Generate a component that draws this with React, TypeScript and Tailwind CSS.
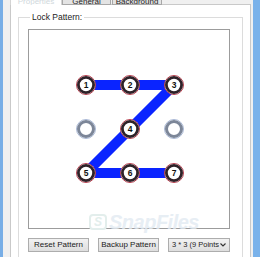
import React from "react";

const cols = [57, 101, 145];
const rows = [55, 99, 143];

const nodes = [
  { x: cols[0], y: rows[0], n: 1 },
  { x: cols[1], y: rows[0], n: 2 },
  { x: cols[2], y: rows[0], n: 3 },
  { x: cols[1], y: rows[1], n: 4 },
  { x: cols[0], y: rows[2], n: 5 },
  { x: cols[1], y: rows[2], n: 6 },
  { x: cols[2], y: rows[2], n: 7 },
];

const idle = [
  { x: cols[0], y: rows[1] },
  { x: cols[2], y: rows[1] },
];

const PatternCanvas = () => {
  const segs = nodes.slice(1).map((p, i) => [nodes[i], p]);
  return (
    <svg width="200" height="198" viewBox="0 0 200 198">
      {segs.map(([a, b], i) => (
        <line key={i} x1={a.x} y1={a.y} x2={b.x} y2={b.y} stroke="#0a24ff" strokeWidth="10" strokeLinecap="butt" />
      ))}
      {idle.map((p, i) => (
        <g key={i}>
          <circle cx={p.x} cy={p.y} r="9.5" fill="none" stroke="#a9b8d6" strokeWidth="1" />
          <circle cx={p.x} cy={p.y} r="7.5" fill="#fff" stroke="#7c8698" strokeWidth="3" />
        </g>
      ))}
      {nodes.map((p) => (
        <g key={p.n}>
          <circle cx={p.x} cy={p.y} r="9.5" fill="#fff" stroke="#b8404f" strokeWidth="1" />
          <circle cx={p.x} cy={p.y} r="7.6" fill="#fff" stroke="#2e2228" strokeWidth="2.8" />
          <text
            x={p.x}
            y={p.y + 3}
            textAnchor="middle"
            fontSize="8.5"
            fontWeight="bold"
            fontFamily="Liberation Sans, Arial, sans-serif"
            fill="#111"
          >
            {p.n}
          </text>
        </g>
      ))}
    </svg>
  );
};

const Btn = ({ children, className }: { children: React.ReactNode; className?: string }) => (
  <div
    className={`h-[14px] flex items-center justify-center whitespace-nowrap border border-[#adadad] bg-gradient-to-b from-[#f2f2f2] to-[#dedede] text-[8px] text-[#1a1a1a] leading-none ${className ?? ""}`}
  >
    {children}
  </div>
);

export default function App() {
  return (
    <div
      className="w-[260px] h-[257px] overflow-hidden flex bg-[#f0f0f0] text-[8px] text-[#1e1e1e]"
      style={{ fontFamily: '"Liberation Sans", Arial, sans-serif' }}
    >
      <div className="w-[3px] bg-[#78aee6]" />

      <div className="w-[250px] flex flex-col pl-[7px] pr-[2px]">
        {/* tab strip, cut off at the top of the shot */}
        <div className="h-[5px] flex items-end relative z-10">
          <div className="w-[52px] h-[5px] border-x border-[#d4d4d4] bg-white overflow-hidden flex items-end justify-center">
            <span className="text-[8px] leading-[8px] text-[#d0d8dc] translate-y-[1px]">Properties</span>
          </div>
          <div className="w-[49px] h-[5px] border border-t-0 border-[#a8a8a8] bg-[#e4e4e4] overflow-hidden flex items-end justify-center">
            <span className="text-[8px] leading-[8px] translate-y-[2px]">General</span>
          </div>
          <div className="ml-[1px] w-[50px] h-[5px] border border-t-0 border-[#a8a8a8] bg-[#e4e4e4] overflow-hidden flex items-end justify-center">
            <span className="text-[8px] leading-[8px] translate-y-[2px]">Background</span>
          </div>
        </div>

        {/* tab page */}
        <div className="-mt-px flex-1 border border-[#c9c9c9] bg-white pl-[7px] pr-[7px] pt-[7px] relative">
          <fieldset className="border border-[#dcdcdc] border-b-0 h-[260px] pl-[9px] pr-[10px] pt-[7px]">
            <legend className="ml-[2px] px-[2px] text-[8.5px] leading-[10px] text-[#222]">Lock Pattern:</legend>
            <div className="w-[202px] h-[200px] border border-[#9c9c9c] bg-white">
              <PatternCanvas />
            </div>
            <div className="mt-[9px] flex gap-[9px]">
              <Btn className="w-[61px]">Reset Pattern</Btn>
              <Btn className="w-[61px]">Backup Pattern</Btn>
              <div className="w-[62px] h-[14px] flex items-center justify-between border border-[#adadad] bg-gradient-to-b from-[#f2f2f2] to-[#dedede] pl-[3px] pr-[3px] text-[7.5px] leading-none">
                <span className="whitespace-nowrap overflow-hidden">3 * 3 (9 Points</span>
                <svg width="6" height="4" viewBox="0 0 6 4" className="shrink-0 ml-[1px]">
                  <path d="M0.5 0.5 L3 3 L5.5 0.5" fill="none" stroke="#333" strokeWidth="1.1" />
                </svg>
              </div>
            </div>
          </fieldset>

          {/* faint watermark over the canvas */}
          <div className="absolute left-[78px] top-[202px] flex items-center gap-[2px] pointer-events-none">
            <div className="w-[18px] h-[16px] rounded-[4px] border-2 border-[#e3eeec] text-[#e3eeec] text-[12px] font-bold italic flex items-center justify-center">
              S
            </div>
            <span className="text-[20px] font-bold italic text-[#e2eaf2] opacity-80 tracking-tight">SnapFiles</span>
          </div>
        </div>
      </div>

      <div className="w-[7px] bg-[#7ab2ea]" />
    </div>
  );
}
